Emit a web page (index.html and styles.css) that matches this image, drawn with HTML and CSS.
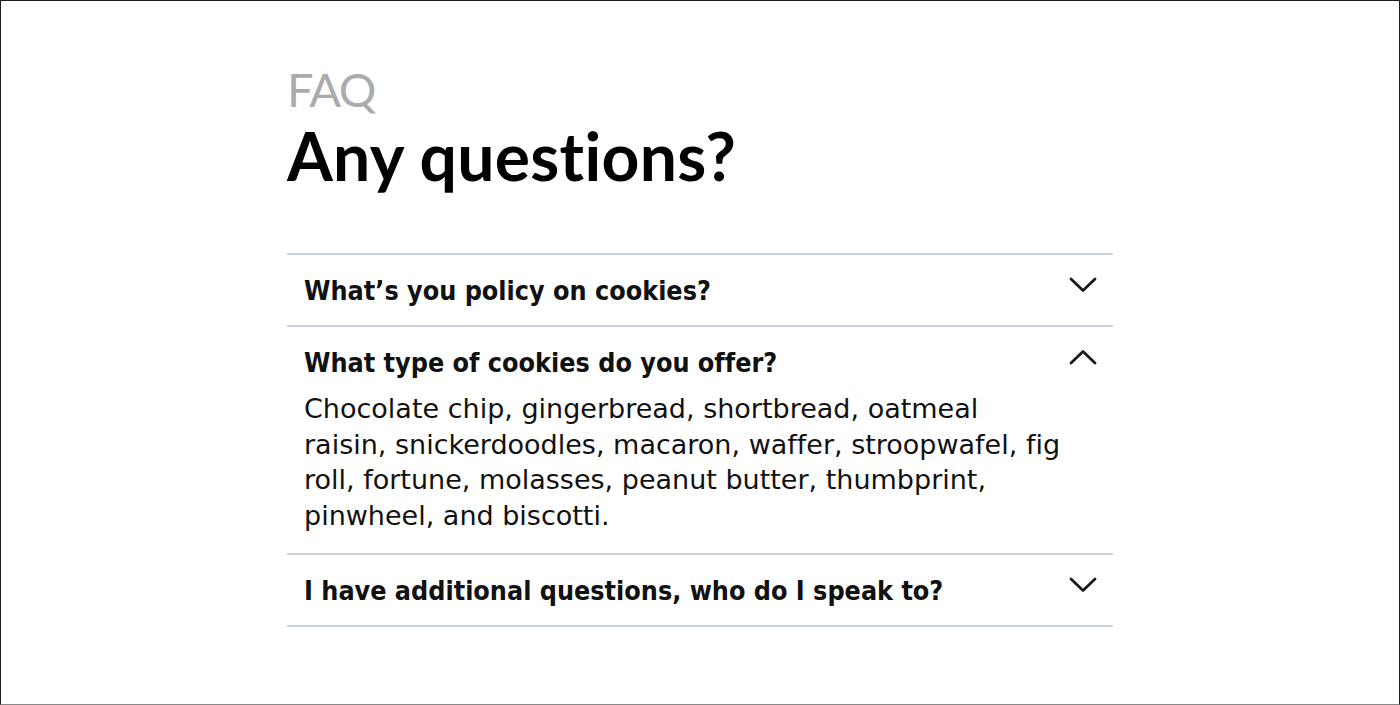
FILE: index.html
```html
<!DOCTYPE html>
<html lang="en">
<head>
<meta charset="utf-8">
<title>FAQ</title>
<link rel="stylesheet" href="styles.css">
</head>
<body>
<div class="frame">
  <main class="faq">
    <p class="eyebrow">FAQ</p>
    <h1 class="title">Any questions?</h1>
    <ul class="list">
      <li class="item">
        <div class="question">
          <span>What’s you policy on cookies?</span>
          <svg class="chev" viewBox="0 0 28 16" width="28" height="16"><path d="M2 2 L14 13.5 L26 2" fill="none" stroke="#1a1a1a" stroke-width="2.8" stroke-linecap="round" stroke-linejoin="round"/></svg>
        </div>
      </li>
      <li class="item open">
        <div class="question">
          <span>What type of cookies do you offer?</span>
          <svg class="chev" viewBox="0 0 28 16" width="28" height="16"><path d="M2 14 L14 2.5 L26 14" fill="none" stroke="#1a1a1a" stroke-width="2.8" stroke-linecap="round" stroke-linejoin="round"/></svg>
        </div>
        <p class="answer">Chocolate chip, gingerbread, shortbread, oatmeal raisin, snickerdoodles, macaron, waffer, stroopwafel, fig roll, fortune, molasses, peanut butter, thumbprint, pinwheel, and biscotti.</p>
      </li>
      <li class="item">
        <div class="question">
          <span>I have additional questions, who do I speak to?</span>
          <svg class="chev" viewBox="0 0 28 16" width="28" height="16"><path d="M2 2 L14 13.5 L26 2" fill="none" stroke="#1a1a1a" stroke-width="2.8" stroke-linecap="round" stroke-linejoin="round"/></svg>
        </div>
      </li>
    </ul>
  </main>
</div>
</body>
</html>
```
FILE: styles.css
```css
html, body {
  margin: 0;
  padding: 0;
  background: #fff;
}
body {
  font-family: "DejaVu Sans", sans-serif;
  color: #111;
  font-variant-ligatures: none;
}
.frame {
  box-sizing: border-box;
  width: 1400px;
  height: 705px;
  border: 1px solid #1e1e1e;
  border-bottom-color: #888;
  overflow: hidden;
}
.faq {
  width: 826px;
  margin: 0 auto;
  padding-top: 60px;
}
.eyebrow {
  margin: 0;
  font-family: Lato, sans-serif;
  font-size: 47px;
  line-height: 56px;
  color: #ababab;
  font-weight: 400;
  letter-spacing: -1.5px;
}
.title {
  margin: 3px 0 0;
  font-family: Lato, sans-serif;
  font-size: 66px;
  line-height: 72px;
  font-weight: 700;
  color: #000;
  letter-spacing: 0.3px;
}
.list {
  list-style: none;
  margin: 61px 0 0;
  padding: 0;
  border-top: 2px solid #cbd4de;
}
.item {
  border-bottom: 2px solid #cbd4de;
  padding: 21px 16px 19px 17px;
}
.question {
  display: flex;
  justify-content: space-between;
  align-items: flex-start;
  font-family: "DejaVu Sans Condensed", "DejaVu Sans", sans-serif;
  font-size: 26.7px;
  line-height: 30px;
  font-weight: 700;
  color: #111;
}
.chev {
  flex: none;
  margin-top: 1px;
}
.answer {
  margin: 13px 0 0;
  font-size: 27px;
  line-height: 35.7px;
  font-weight: 400;
  color: #111;
  max-width: 762px;
}
```
